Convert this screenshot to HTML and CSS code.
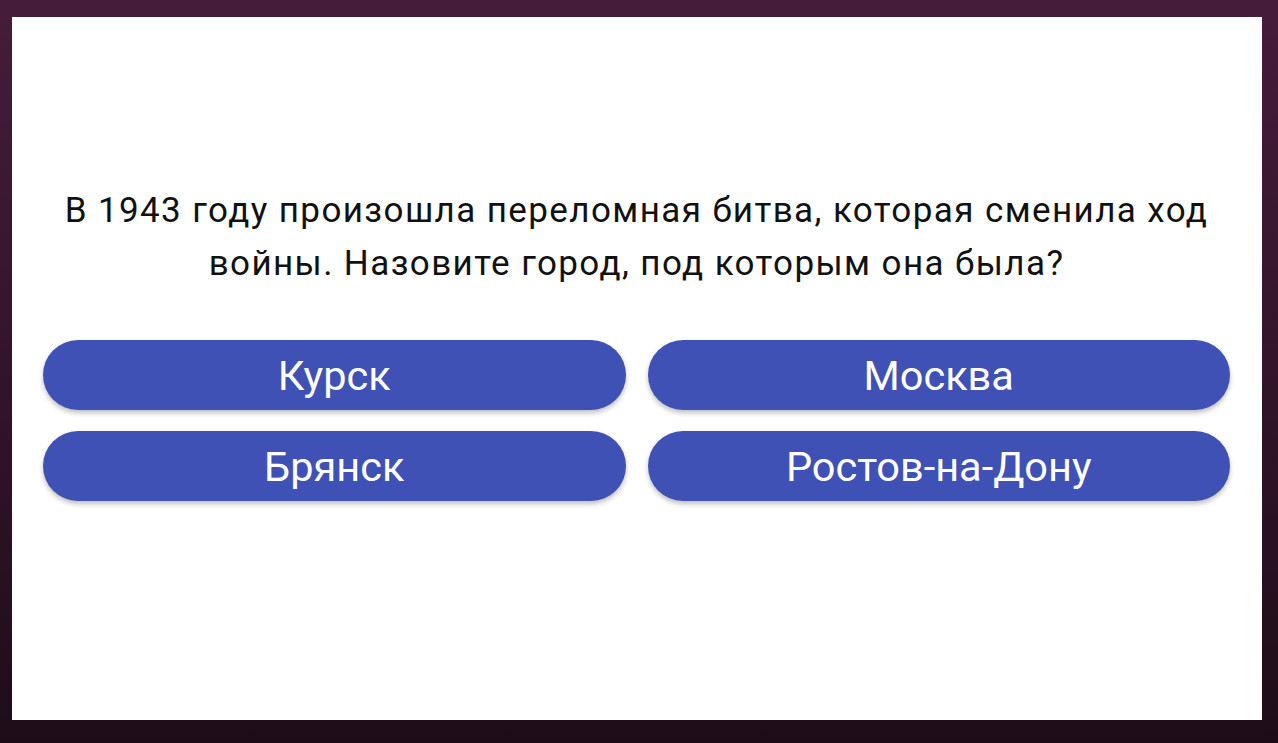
FILE: index.html
```html
<!DOCTYPE html>
<html lang="ru">
<head>
  <meta charset="UTF-8">
  <meta name="viewport" content="width=device-width, initial-scale=1.0">
  <title>Викторина</title>
  <link rel="stylesheet" href="styles.css">
</head>
<body>
  <div class="quiz-card">
    <div class="question">В 1943 году произошла переломная битва, которая сменила ход войны. Назовите город, под которым она была?</div>
    <div class="answers">
      <button class="answer">Курск</button>
      <button class="answer">Москва</button>
      <button class="answer">Брянск</button>
      <button class="answer">Ростов-на-Дону</button>
    </div>
  </div>
</body>
</html>
```

FILE: styles.css
```css
html, body {
  height: 100%;
}
body {
  font-family: Roboto, "Noto Sans", sans-serif;
  margin: 0;
  padding: 17px 16px 23px 12px;
  box-sizing: border-box;
  background: linear-gradient(to bottom, #461c3b, #1e0d18);
  display: flex;
}
.quiz-card {
  flex: 1;
  background-color: #fff;
  padding: 167px 32px 0 31px;
}
.question {
  font-size: 35px;
  line-height: 53px;
  letter-spacing: 1.4px;
  text-align: center;
  color: #111;
  margin-bottom: 50px;
}
.answers {
  display: grid;
  grid-template-columns: 1fr 1fr;
  column-gap: 22px;
  row-gap: 21px;
}
.answer {
  height: 70px;
  border: none;
  border-radius: 35px;
  background-color: #3f51b5;
  color: #fff;
  font-family: Roboto, "Noto Sans", sans-serif;
  font-size: 41.5px;
  cursor: pointer;
  box-shadow: 0 3px 5px rgba(0, 0, 0, 0.25);
}
.answer:hover {
  background-color: #3949ab;
}
```
